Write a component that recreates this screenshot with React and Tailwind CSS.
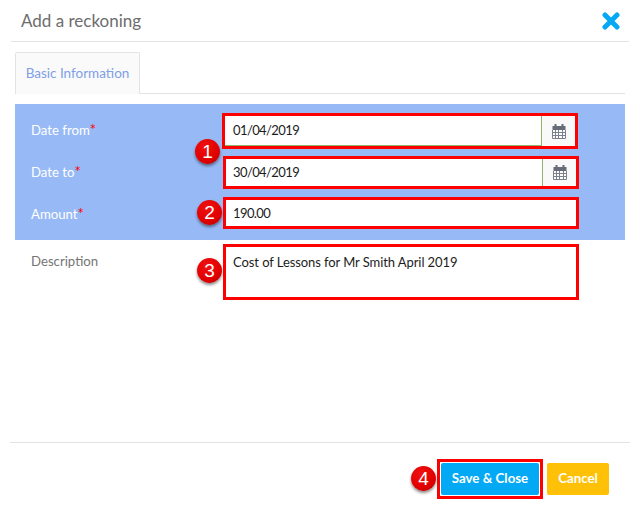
import React from "react";

const font = { fontFamily: 'Lato, "Noto Sans", sans-serif' };

function Cal() {
  return (
    <svg width="14" height="15" viewBox="0 0 14 15" className="block">
      <rect x="0" y="5" width="14" height="10" fill="#fffdf8" />
      <rect x="0.5" y="2" width="13" height="4" fill="#666b78" />
      <rect x="2.5" y="0" width="2" height="4" fill="#666b78" />
      <rect x="9.5" y="0" width="2" height="4" fill="#666b78" />
      <path d="M0.5 6V14.5H13.5V6M3.5 6V14.5M6.5 6V14.5M10.5 6V14.5M0.5 8.5H13.5M0.5 11.5H13.5" fill="none" stroke="#7a8090" strokeWidth="1" />
    </svg>
  );
}

function Badge({ n, className }) {
  return (
    <div
      className={"absolute w-[25px] h-[25px] rounded-full bg-[radial-gradient(circle_at_40%_30%,#f01010,#e00000_60%,#b00000)] text-white text-[19px] leading-[25px] text-center shadow-[0_2px_3px_rgba(0,0,0,0.45)] " + className}
      style={{ fontFamily: '"Liberation Sans", sans-serif' }}
    >
      {n}
    </div>
  );
}

function Star() {
  return <span className="text-[#fe0000] text-[15px] leading-none">*</span>;
}

function DateField({ value, className, innerClass }) {
  return (
    <div className={"border-[3px] border-[#fe0000] flex bg-white " + className}>
      <div className={"flex-1 flex items-center text-[13px] tracking-[-0.6px] text-[#1c1c1c] border-r border-[#8fb56a] " + innerClass}>{value}</div>
      <div className="w-[33px] bg-[#f9f9f9] flex items-center justify-center">
        <Cal />
      </div>
    </div>
  );
}

export default function App() {
  return (
    <div className="relative w-[640px] h-[509px] bg-white flex flex-col overflow-hidden" style={font}>
      <div className="mx-[11px] h-[42px] border-b border-[#e3e3e3] flex items-center justify-between pl-[10px] pr-[9px] shrink-0">
        <span className="text-[17px] text-[#6d6d6d]">Add a reckoning</span>
        <svg width="18" height="18" viewBox="0 0 18 18" className="block">
          <path d="M3 3L15 15M15 3L3 15" stroke="#03a9f4" strokeWidth="5" strokeLinecap="round" />
        </svg>
      </div>

      <div className="mx-[15px] mt-[10px] h-[42px] border-b border-[#e3e3e3] flex shrink-0">
        <div className="w-[125px] h-[42px] bg-[#fafafa] border border-b-0 border-[#e3e3e3] rounded-t-[2px] flex items-center justify-center text-[13.5px] text-[#7f9fe6]">
          Basic Information
        </div>
      </div>

      <div className="mx-[15px] mt-[10px] bg-[#97b9f5] pt-[9px] pb-[11px] pl-[16px] pr-[46px] flex flex-col shrink-0">
        <div className="flex items-center h-[36px]">
          <div className="w-[191px] pb-px text-[13.2px] text-white">Date from<Star /></div>
          <DateField value="01/04/2019" className="w-[356px] h-[36px]" innerClass="pl-[8px] border-b" />
        </div>
        <div className="flex items-center h-[33px] mt-[7px]">
          <div className="w-[192px] text-[13.2px] text-white">Date to<Star /></div>
          <DateField value="30/04/2019" className="w-[356px] h-[33px]" innerClass="pl-[7px]" />
        </div>
        <div className="flex items-center h-[32px] mt-[8px]">
          <div className="w-[192px] pt-[3px] text-[13.2px] text-white">Amount<Star /></div>
          <div className="w-[356px] h-[32px] border-[3px] border-[#fe0000] bg-white flex items-center pl-[7px] pt-[2px] text-[13px] tracking-[-0.6px] text-[#1c1c1c]">190.00</div>
        </div>
      </div>

      <div className="mx-[15px] mt-[4px] pl-[16px] flex shrink-0">
        <div className="w-[192px] pt-[8px] text-[13.2px] leading-[18px] text-[#757575]">Description</div>
        <div className="w-[356px] h-[56px] border-[3px] border-[#fe0000] bg-white pl-[7px] pt-[6px] text-[13px] tracking-[-0.08px] leading-[18px] text-[#1c1c1c]">
          Cost of Lessons for Mr Smith April 2019
        </div>
      </div>

      <div className="mx-[10px] mt-[142px] border-t border-[#e3e3e3] flex justify-end items-start pt-[16px] pr-[21px] shrink-0">
        <div className="border-[3px] border-[#fe0000] p-px">
          <button className="w-[98px] h-[32px] bg-[#03a9f4] rounded-[2px] text-white text-[13.3px] font-bold">Save &amp; Close</button>
        </div>
        <button className="ml-[4px] mt-[4px] w-[62px] h-[32px] bg-[#ffc107] rounded-[2px] text-white text-[13.3px] font-bold">Cancel</button>
      </div>

      <Badge n="1" className="left-[195px] top-[139px]" />
      <Badge n="2" className="left-[197px] top-[200px]" />
      <Badge n="3" className="left-[197px] top-[258px]" />
      <Badge n="4" className="left-[411px] top-[466px]" />
    </div>
  );
}
